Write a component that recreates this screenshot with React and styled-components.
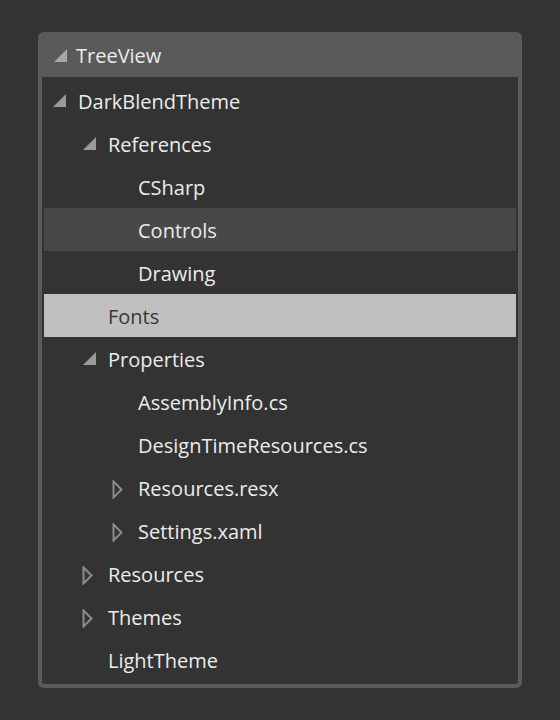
import React from 'react';
import styled, { createGlobalStyle } from 'styled-components';

const GlobalStyle = createGlobalStyle`
  body {
    margin: 0;
    background: #333333;
    font-family: 'Open Sans', 'Noto Sans', sans-serif;
  }
`;

const Page = styled.div`
  padding: 32px 38px;
`;

const Panel = styled.div`
  width: 476px;
  border: 4px solid #5a5a5a;
  border-top: none;
  border-radius: 6px;
  background: #333333;
  overflow: hidden;
`;

const Header = styled.div`
  height: 45px;
  margin: 0 -4px;
  padding-left: 16px;
  display: flex;
  align-items: center;
  background: #5a5a5a;
  color: #ececec;
  font-size: 20px;
`;

const HeaderArrow = styled.span`
  display: flex;
  width: 22px;
  margin-top: 1px;
`;

const Body = styled.div`
  padding: 2px 2px 3px;
`;

const Row = styled.div`
  height: 43px;
  display: flex;
  align-items: center;
  padding-left: ${(p) => 9 + p.level * 30}px;
  background: ${(p) => (p.selected ? '#c0c0c0' : p.hover ? '#484848' : 'transparent')};
  color: ${(p) => (p.selected ? '#383838' : '#ececec')};
  font-size: 20px;
`;

const Label = styled.span`
  padding-top: 2px;
`;

const Toggle = styled.span`
  width: 25px;
  display: flex;
  align-items: center;
`;

const Expanded = ({ color = '#9a9a9a' }) => (
  <svg width="13" height="13" viewBox="0 0 13 13">
    <polygon points="13,0 13,13 0,13" fill={color} />
  </svg>
);

const Collapsed = () => (
  <svg width="11" height="19" viewBox="0 0 11 19" style={{ marginLeft: -1, marginTop: 4 }}>
    <polygon points="1.5,1.5 9.5,9.5 1.5,17.5" fill="none" stroke="#8c8c8c" strokeWidth="2" />
  </svg>
);

const items = [
  { label: 'DarkBlendTheme', level: 0, state: 'open' },
  { label: 'References', level: 1, state: 'open' },
  { label: 'CSharp', level: 2 },
  { label: 'Controls', level: 2, hover: true },
  { label: 'Drawing', level: 2 },
  { label: 'Fonts', level: 1, selected: true },
  { label: 'Properties', level: 1, state: 'open' },
  { label: 'AssemblyInfo.cs', level: 2 },
  { label: 'DesignTimeResources.cs', level: 2 },
  { label: 'Resources.resx', level: 2, state: 'closed' },
  { label: 'Settings.xaml', level: 2, state: 'closed' },
  { label: 'Resources', level: 1, state: 'closed' },
  { label: 'Themes', level: 1, state: 'closed' },
  { label: 'LightTheme', level: 1 },
];

export default function App() {
  return (
    <Page>
      <GlobalStyle />
      <Panel>
        <Header>
          <HeaderArrow>
            <Expanded color="#a8a8a8" />
          </HeaderArrow>
          <Label>TreeView</Label>
        </Header>
        <Body>
          {items.map((it) => (
            <Row key={it.label} level={it.level} selected={it.selected} hover={it.hover}>
              <Toggle>
                {it.state === 'open' && <Expanded />}
                {it.state === 'closed' && <Collapsed />}
              </Toggle>
              <Label>{it.label}</Label>
            </Row>
          ))}
        </Body>
      </Panel>
    </Page>
  );
}
